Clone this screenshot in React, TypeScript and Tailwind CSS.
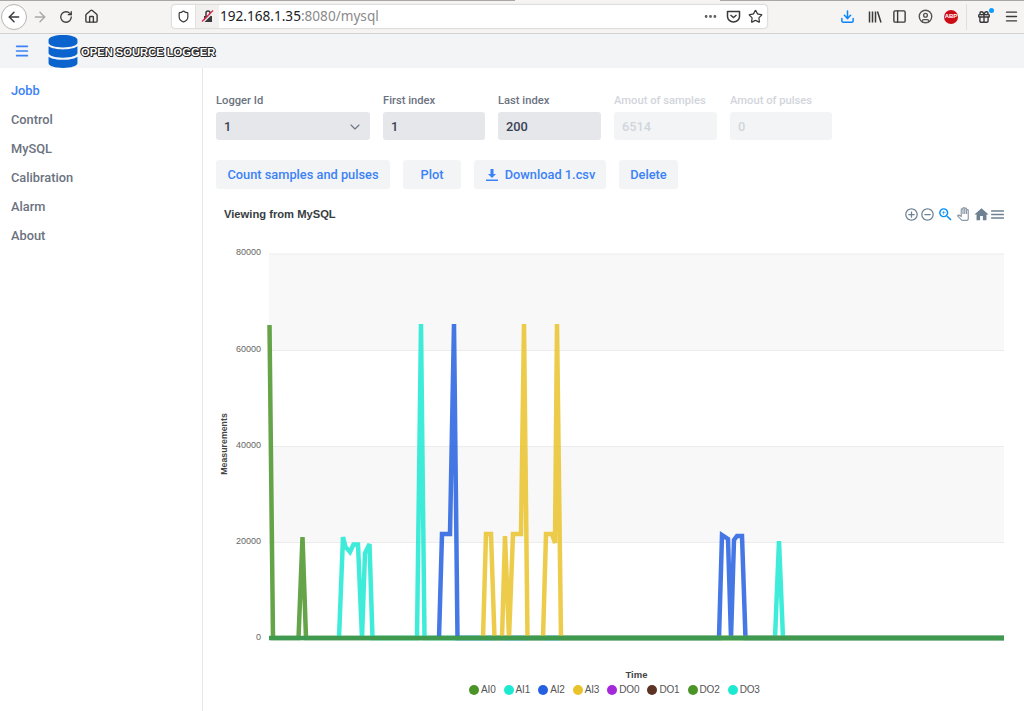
import { ArrowLeft, ArrowRight, ChevronDown, CircleUser, Download, Ellipsis, Gift, House, Menu, PanelLeft, RotateCw, Shield, Star } from 'lucide-react';
import { FaDatabase } from 'react-icons/fa';
import { MdAddCircleOutline, MdHome, MdMenu, MdOutlinePanTool, MdRemoveCircleOutline, MdZoomIn } from 'react-icons/md';

const navItems = ['Jobb', 'Control', 'MySQL', 'Calibration', 'Alarm', 'About'];

const legend = [
  { name: 'AI0', color: '#4a9428' },
  { name: 'AI1', color: '#1de9d2' },
  { name: 'AI2', color: '#2460e0' },
  { name: 'AI3', color: '#e9c32a' },
  { name: 'DO0', color: '#a429d9' },
  { name: 'DO1', color: '#5c3222' },
  { name: 'DO2', color: '#4a9428' },
  { name: 'DO3', color: '#1de9d2' },
];

// page coordinates, the chart's viewBox starts at the svg's own corner
const series = [
  { color: '#4a9428', points: '269.5,325 273,638 298.5,638 302.5,537 306,638 1004,638' },
  {
    color: '#1de9d2',
    points:
      '339,638 343,537 345.5,547 350,552 353.5,544.5 358,544.5 362,638 365,553 369.5,544 372.5,638 417,638 421,324 424.5,638 775,638 779,541 783,638 1004,638',
  },
  {
    color: '#2460e0',
    points: '439,638 442,534 450,534 454,324 457.5,638 719,638 722,535 728,539 731,638 734,540 737,536 742,536 745.5,638 1004,638',
  },
  {
    color: '#e9c32a',
    points: '483,638 486,534 491,534 494.5,638 502,638 505,536 509,638 513,534 521,534 524,324 527.5,638 543,638 546,534 552,534 555,543 557,324 561,638 1004,638',
  },
];

const yTicks = [
  { label: '80000', y: 254 },
  { label: '60000', y: 350.5 },
  { label: '40000', y: 446.5 },
  { label: '20000', y: 542.5 },
  { label: '0', y: 638.5 },
];

function BrowserBar() {
  return (
    <div className="relative flex h-[34px] items-center border-b border-[#d4d3d2] bg-[#f5f4f3] text-[#3a3a3c]">
      <div className="absolute top-0 left-0 h-px w-[515px] bg-[#a8a7a6]" />
      <div className="absolute top-0 right-0 h-px w-[304px] bg-[#a8a7a6]" />
      <div className="ml-[1px] flex h-[26px] w-[26px] items-center justify-center rounded-full border border-[#b5b5b5] bg-white">
        <ArrowLeft size={16} strokeWidth={2.2} />
      </div>
      <ArrowRight size={16} strokeWidth={2.2} className="ml-[5px] text-[#a9a9a9]" />
      <RotateCw size={14} strokeWidth={2.2} className="ml-[11px]" />
      <House size={15} strokeWidth={2.2} className="ml-[11px]" />
      <div className="-mt-[1px] ml-[73px] flex h-[23px] w-[595px] items-center rounded-[3px] bg-white font-['Noto_Sans',sans-serif] text-[13.6px] shadow-[0_0_2px_rgba(0,0,0,0.35)]">
        <Shield size={13} strokeWidth={2.2} className="ml-[5px]" />
        <div className="ml-[5px] flex h-full w-[24px] items-center justify-center border-l border-[#e2e2e2] bg-[#f1f0ef]">
          <svg width="14" height="14" viewBox="0 0 14 14">
            <path d="M3 7h8v6H3z" fill="#3a3a3c" />
            <path d="M5 7V4a2 2 0 0 1 4 0v3" fill="none" stroke="#3a3a3c" strokeWidth="1.5" />
            <path d="M2 13.5 13 2.5" stroke="#f1f0ef" strokeWidth="1.4" />
            <path d="M1 12.5 12 1.5" stroke="#e22850" strokeWidth="1.5" />
          </svg>
        </div>
        <span className="ml-[1px] text-[#202023]">192.168.1.35</span>
        <span className="text-[#8a8a8c]">:8080/mysql</span>
        <div className="ml-auto flex items-center">
          <Ellipsis size={15} strokeWidth={2.5} className="text-[#5a5a5c]" />
          <svg width="15" height="15" viewBox="0 0 15 15" className="ml-[8px]" fill="none" stroke="#3a3a3c" strokeWidth="1.5">
            <path d="M1.5 2.5h12v5a6 5.5 0 0 1-12 0z" strokeLinejoin="round" />
            <path d="m4.5 6 3 2.5 3-2.5" />
          </svg>
          <Star size={15} strokeWidth={2} className="mr-[4px] ml-[7px]" />
        </div>
      </div>
      <Download size={15} strokeWidth={2.4} className="ml-[73px] text-[#0a84ff]" />
      <svg width="14" height="14" viewBox="0 0 14 14" className="ml-[13px]" fill="none" stroke="#3a3a3c" strokeWidth="1.5">
        <path d="M1.5 1.5v11M4.5 1.5v11M7.5 1.5v11M9.5 1.5l3.5 11" />
      </svg>
      <PanelLeft size={15} strokeWidth={2.2} className="ml-[10px]" />
      <CircleUser size={15} strokeWidth={2.2} className="ml-[11px] text-[#555]" />
      <div className="ml-[11px] flex h-[14px] w-[14px] items-center justify-center rounded-full bg-[#cc0d16] font-['Liberation_Sans',sans-serif] text-[6px] font-bold text-white">
        ABP
      </div>
      <div className="ml-[8px] h-[26px] w-px bg-[#e0dfde]" />
      <div className="relative ml-[10px]">
        <Gift size={14} strokeWidth={2.4} />
        <div className="absolute -top-[2px] -right-[3px] h-[5px] w-[5px] rounded-full bg-[#0a9dff]" />
      </div>
      <Menu size={15} strokeWidth={2.2} className="ml-[13px]" />
    </div>
  );
}

function TopBar() {
  return (
    <header className="relative flex h-[34px] items-center bg-[#f3f4f6]">
      <Menu size={16} strokeWidth={2.6} className="ml-[14px] text-[#3b82f6]" />
      <FaDatabase className="z-10 mt-[1px] ml-[18px] h-[33px] w-[30px] text-[#0b63ce]" />
      <span className="mt-[2px] ml-[3px] font-['Liberation_Sans',sans-serif] text-[11.2px] font-bold text-white [text-shadow:1px_0_0_#222,-1px_0_0_#222,0_1px_0_#222,0_-1px_0_#222,1px_1px_0_#222,-1px_-1px_0_#222]">
        OPEN SOURCE LOGGER
      </span>
    </header>
  );
}

function Sidebar() {
  return (
    <nav className="w-[203px] shrink-0 border-r border-[#e5e7eb] pt-[8px] pl-[11px]">
      {navItems.map((item, i) => (
        <div key={item} className={`flex h-[29px] items-center text-[12.8px] font-medium ${i === 0 ? 'text-[#3b82f6]' : 'text-[#6b7280]'}`}>
          {item}
        </div>
      ))}
    </nav>
  );
}

function Field({ label, value, width, disabled, select }: { label: string; value: string; width: string; disabled?: boolean; select?: boolean }) {
  return (
    <div className={width}>
      <div className={`mb-[4px] h-[15px] text-[11.2px] leading-[15px] font-medium ${disabled ? 'text-[#d1d5db]' : 'text-[#6b7280]'}`}>{label}</div>
      <div
        className={`flex h-[28px] items-center justify-between rounded-[3px] pt-[1px] pr-[7px] pl-[8px] text-[12.8px] font-medium ${
          disabled ? 'bg-[#f3f4f6] text-[#d1d5db]' : 'bg-[#e5e7eb] text-[#374151]'
        }`}
      >
        {value}
        {select && <ChevronDown size={16} strokeWidth={1.6} className="text-[#6b7280]" />}
      </div>
    </div>
  );
}

function ActionButton({ children, width }: { children: React.ReactNode; width: string }) {
  return (
    <button className={`flex h-[29px] items-center justify-center gap-[6px] rounded-[3px] bg-[#f3f4f6] text-[12.8px] font-medium text-[#3b82f6] ${width}`}>
      {children}
    </button>
  );
}

function Chart() {
  return (
    <svg viewBox="203 225 821 480" className="mt-[2px] block h-[480px] w-[821px] font-['Liberation_Sans',sans-serif]">
      <rect x="269" y="254" width="735" height="96.5" fill="#f8f8f8" />
      <rect x="269" y="446.5" width="735" height="96" fill="#f8f8f8" />
      {yTicks.map((t) => (
        <g key={t.label}>
          {t.y !== 638.5 && <line x1="269" x2="1004" y1={t.y} y2={t.y} stroke="#ececec" />}
          <text x="261" y={t.y + 1} textAnchor="end" fontSize="9" fill="#666">
            {t.label}
          </text>
        </g>
      ))}
      <text transform="translate(227 444) rotate(-90)" textAnchor="middle" fontSize="8.8" fontWeight="700" fill="#444">
        Measurements
      </text>
      {series.map((s) => (
        <polyline key={s.color} points={s.points} fill="none" stroke={s.color} strokeWidth="4.5" strokeOpacity="0.85" strokeLinejoin="miter" />
      ))}
      <line x1="269" x2="1004" y1="638" y2="638" stroke="#3f994f" strokeWidth="4.5" />
      <text x="636.5" y="678" textAnchor="middle" fontSize="9.5" fontWeight="700" fill="#444">
        Time
      </text>
    </svg>
  );
}

export default function App() {
  return (
    <div className="flex h-[711px] flex-col overflow-hidden bg-white font-['Roboto',sans-serif]">
      <BrowserBar />
      <TopBar />
      <div className="flex min-h-0 flex-1">
        <Sidebar />
        <main className="relative min-w-0 flex-1">
          <div className="flex gap-[13px] pt-[25px] pl-[13px]">
            <Field label="Logger Id" value="1" width="w-[154px]" select />
            <Field label="First index" value="1" width="w-[102px]" />
            <Field label="Last index" value="200" width="w-[103px]" />
            <Field label="Amout of samples" value="6514" width="w-[103px]" disabled />
            <Field label="Amout of pulses" value="0" width="w-[102px]" disabled />
          </div>
          <div className="mt-[20px] flex gap-[13px] pl-[13px]">
            <ActionButton width="w-[174px]">Count samples and pulses</ActionButton>
            <ActionButton width="w-[58px]">Plot</ActionButton>
            <ActionButton width="w-[132px]">
              <svg width="14" height="14" viewBox="0 0 14 14" fill="#3b82f6">
                <path d="M5.5 1h3v5h2.5L7 10 3 6h2.5zM1 11.5h12V13H1z" />
              </svg>
              Download 1.csv
            </ActionButton>
            <ActionButton width="w-[59px]">Delete</ActionButton>
          </div>
          <div className="mt-[16px] flex h-[18px] items-center justify-between pr-[18px] pl-[21px]">
            <span className="font-['Liberation_Sans',sans-serif] text-[11.2px] font-bold text-[#373d3f]">Viewing from MySQL</span>
            <div className="flex items-center text-[#6e8192]">
              <MdAddCircleOutline size={15} />
              <MdRemoveCircleOutline size={15} className="ml-[1px]" />
              <MdZoomIn size={17} className="ml-[2px] text-[#008ffb]" />
              <MdOutlinePanTool size={14} className="ml-[2px] text-[#8a99a6]" />
              <MdHome size={17} className="ml-[3px]" />
              <MdMenu size={17} className="-ml-[1px]" />
            </div>
          </div>
          <Chart />
          <div className="absolute top-[614px] left-[266px] flex gap-[8px] font-['Liberation_Sans',sans-serif] text-[10px] tracking-[-0.15px] text-[#555]">
            {legend.map((l) => (
              <div key={l.name} className="flex items-center gap-[2px]">
                <span className="h-[10px] w-[10px] rounded-full" style={{ backgroundColor: l.color }} />
                {l.name}
              </div>
            ))}
          </div>
        </main>
      </div>
    </div>
  );
}
